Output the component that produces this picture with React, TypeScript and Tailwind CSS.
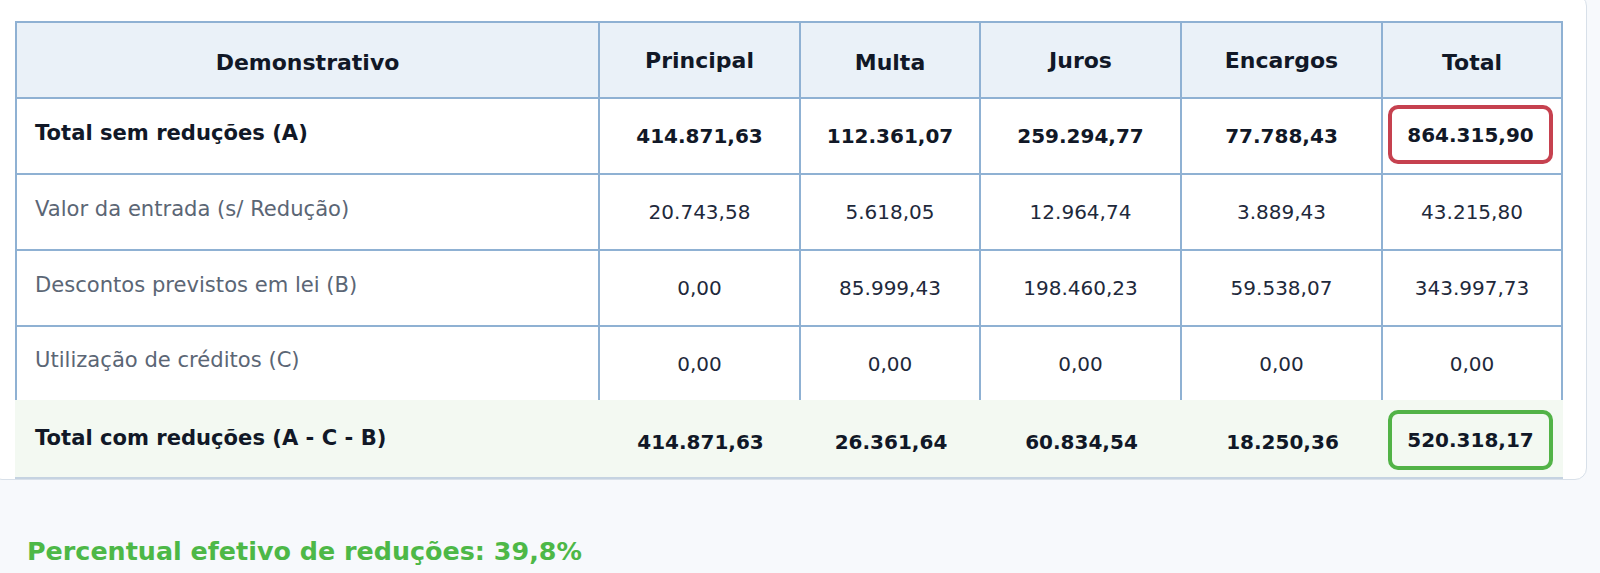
import React from "react";

type Row = {
  label: string;
  values: string[];
  total: string;
  strong?: boolean;
};

const columns = ["Principal", "Multa", "Juros", "Encargos", "Total"];
// headers without descenders sit a bit lower in the reference
const lowHeaders = ["Multa", "Total"];

const rows: Row[] = [
  {
    label: "Total sem reduções (A)",
    values: ["414.871,63", "112.361,07", "259.294,77", "77.788,43"],
    total: "864.315,90",
    strong: true,
  },
  {
    label: "Valor da entrada (s/ Redução)",
    values: ["20.743,58", "5.618,05", "12.964,74", "3.889,43"],
    total: "43.215,80",
  },
  {
    label: "Descontos previstos em lei (B)",
    values: ["0,00", "85.999,43", "198.460,23", "59.538,07"],
    total: "343.997,73",
  },
  {
    label: "Utilização de créditos (C)",
    values: ["0,00", "0,00", "0,00", "0,00"],
    total: "0,00",
  },
];

const finalRow = {
  label: "Total com reduções (A - C - B)",
  values: ["414.871,63", "26.361,64", "60.834,54", "18.250,36"],
  total: "520.318,17",
};

const grid =
  "grid grid-cols-[585px_201px_180px_201px_201px_180px] w-[1548px]";

const App: React.FC = () => {
  return (
    <main className="min-h-screen overflow-hidden bg-[#f7f9fc] font-['DejaVu_Sans','Verdana',sans-serif] text-[#111827]">
      <div className="-ml-[10px] -mt-[6px] w-[1597px] rounded-xl border border-[#d8e0e9] bg-white pl-[24px] pr-[23px] pt-[26px]">
        {/* header */}
        <div className={grid}>
          <div className="flex h-[78px] items-center justify-center border-2 border-[#8fb1d3] bg-[#eaf1f8] pt-[5px] text-[22px] font-bold">
            Demonstrativo
          </div>
          {columns.map((col) => (
            <div
              key={col}
              className={`flex h-[78px] items-center justify-center border-y-2 border-r-2 border-[#8fb1d3] bg-[#eaf1f8] text-[22px] font-bold ${
                lowHeaders.includes(col) ? "pt-[5px]" : "pt-0"
              }`}
            >
              {col}
            </div>
          ))}
        </div>

        {rows.map((row, i) => {
          const last = i === rows.length - 1;
          const cellBase = `flex items-center border-r-2 border-[#8fb1d3] ${
            last ? "h-[73px]" : "h-[76px] border-b-2"
          }`;
          return (
            <div key={row.label} className={grid}>
              <div
                className={`${cellBase} border-l-2 pb-[7px] pl-[18px] ${
                  row.strong
                    ? "text-[21.1px] font-bold text-[#111827]"
                    : "text-[21.1px] text-[#5b6675]"
                }`}
              >
                {row.label}
              </div>
              {row.values.map((v, j) => (
                <div
                  key={j}
                  className={`${cellBase} justify-center ${
                    row.strong
                      ? "text-[20px] font-bold text-[#111827]"
                      : "text-[20px] text-[#1e293b]"
                  }`}
                >
                  {v}
                </div>
              ))}
              {row.strong ? (
                <div className={`${cellBase} pb-[9px] pl-[5px] pr-[8px] pt-[6px]`}>
                  <div className="flex h-[59px] w-[165px] items-center justify-center rounded-[10px] border-4 border-[#c6414f] text-[20px] font-bold">
                    {row.total}
                  </div>
                </div>
              ) : (
                <div
                  className={`${cellBase} justify-center text-[20px] text-[#1e293b]`}
                >
                  {row.total}
                </div>
              )}
            </div>
          );
        })}

        {/* final totals row */}
        <div className={`${grid} bg-[#f3f9f2]`}>
          <div className="flex h-[79px] items-center border-b-2 border-[#c5d3e1] pb-[2px] pl-[20px] text-[21.1px] font-bold">
            {finalRow.label}
          </div>
          {finalRow.values.map((v, j) => (
            <div
              key={j}
              className="flex h-[79px] items-center justify-center border-b-2 border-[#c5d3e1] pt-[6px] text-[20px] font-bold"
            >
              {v}
            </div>
          ))}
          <div className="flex h-[79px] items-start border-b-2 border-[#c5d3e1] pl-[5px] pt-[10px]">
            <div className="flex h-[60px] w-[165px] items-center justify-center rounded-[10px] border-4 border-[#52b347] text-[20px] font-bold">
              {finalRow.total}
            </div>
          </div>
        </div>
      </div>

      <p className="mt-[56px] pl-[27px] text-[25.4px] font-bold leading-[30px] text-[#4db847]">
        Percentual efetivo de reduções: 39,8%
      </p>
    </main>
  );
};

export default App;
